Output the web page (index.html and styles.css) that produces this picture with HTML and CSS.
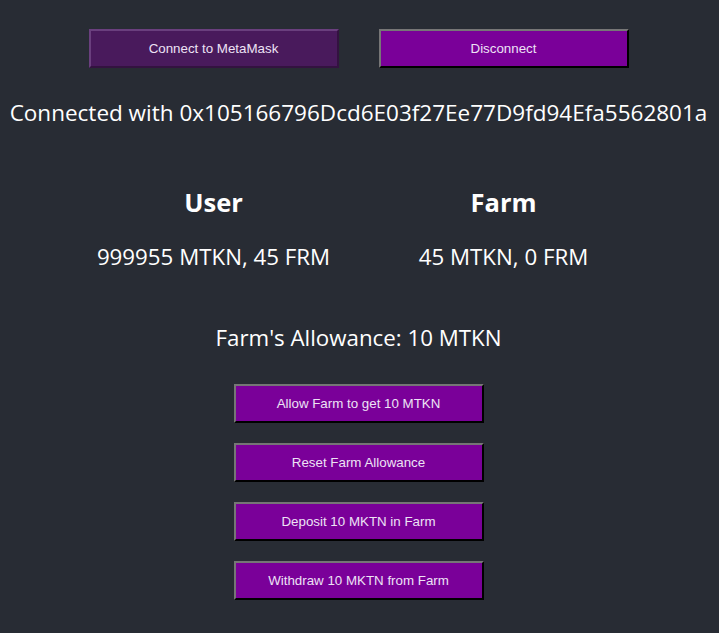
FILE: index.html
```html
<!DOCTYPE html>
<html>
<head>
<meta charset="utf-8">
<link rel="stylesheet" href="styles.css">
</head>
<body>
<div class="app">
  <div class="wallet-row">
    <button class="btn btn-faded">Connect to MetaMask</button>
    <button class="btn">Disconnect</button>
  </div>
  <p class="address">Connected with 0x105166796Dcd6E03f27Ee77D9fd94Efa5562801a</p>
  <div class="balances">
    <div class="col">
      <h2 class="col-title">User</h2>
      <p class="col-value">999955 MTKN, 45 FRM</p>
    </div>
    <div class="col">
      <h2 class="col-title">Farm</h2>
      <p class="col-value">45 MTKN, 0 FRM</p>
    </div>
  </div>
  <p class="allowance">Farm's Allowance: 10 MTKN</p>
  <div class="actions">
    <button class="btn">Allow Farm to get 10 MTKN</button>
    <button class="btn">Reset Farm Allowance</button>
    <button class="btn">Deposit 10 MKTN in Farm</button>
    <button class="btn">Withdraw 10 MKTN from Farm</button>
  </div>
</div>
</body>
</html>
```
FILE: styles.css
```css
html, body {
  margin: 0;
  padding: 0;
  background: #282c34;
}
body {
  font-family: "Open Sans", "Noto Sans", sans-serif;
  color: #ffffff;
  min-height: 633px;
}
.app {
  display: flex;
  flex-direction: column;
  align-items: center;
  padding-top: 29px;
  padding-right: 2px;
}
.wallet-row {
  display: flex;
  gap: 40px;
}
.btn {
  width: 250px;
  height: 39px;
  box-sizing: border-box;
  background: #7a0099;
  color: #ede2f5;
  font-family: "Liberation Sans", Arial, sans-serif;
  font-size: 13.333px;
  border: 2px outset #767676;
  border-color: #767676 #1c1c1c #1c1c1c #767676;
  padding: 0;
}
.btn-faded {
  background: rgba(122, 0, 153, 0.4);
  border-color: rgba(140, 100, 160, 0.5) rgba(28, 28, 28, 0.3) rgba(28, 28, 28, 0.3) rgba(140, 100, 160, 0.5);
}
.address {
  margin: 30px 0 0;
  font-size: 22.5px;
  line-height: 30px;
}
.balances {
  display: grid;
  grid-template-columns: 290px 290px;
  margin-top: 59px;
  text-align: center;
}
.col-title {
  margin: 0;
  font-size: 25.5px;
  font-weight: 700;
  line-height: 30px;
}
.col-value {
  margin: 25px 0 0;
  font-size: 22.3px;
  line-height: 30px;
}
.allowance {
  margin: 51px 0 0;
  font-size: 22.3px;
  line-height: 30px;
}
.actions {
  display: flex;
  flex-direction: column;
  gap: 20px;
  margin-top: 31px;
}
```
